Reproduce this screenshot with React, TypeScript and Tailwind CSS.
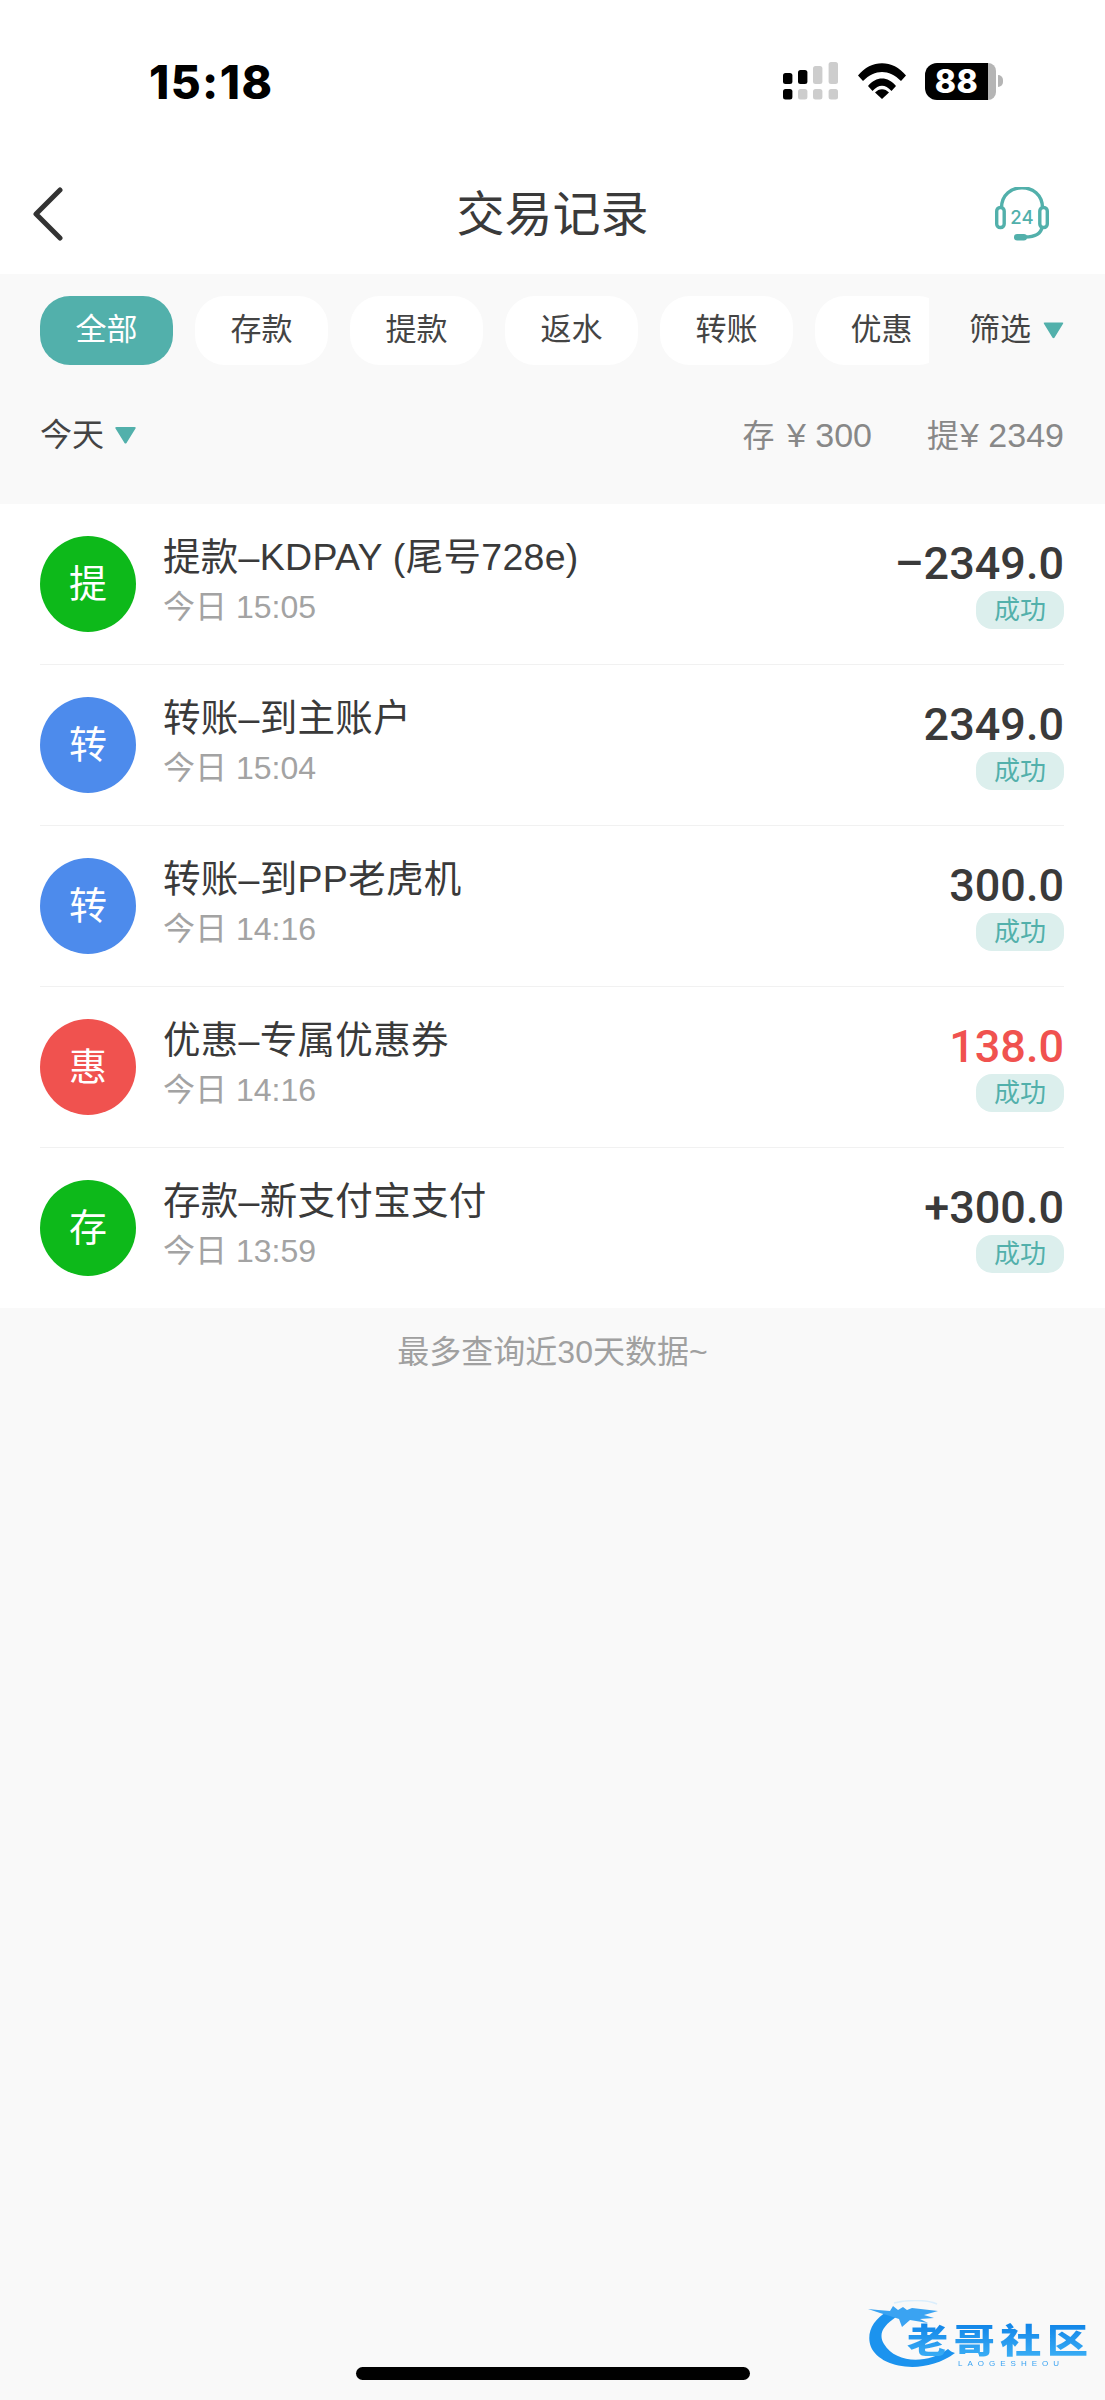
import React from "react";

const FONT = "font-['Liberation_Sans','Noto_Sans_CJK_SC',sans-serif]";

const tabs = ["全部", "存款", "提款", "返水", "转账", "优惠"];

const records = [
  { mark: "提", color: "bg-[#0db91a]", title: "提款–KDPAY (尾号728e)", time: "今日 15:05", amount: "–2349.0", red: false },
  { mark: "转", color: "bg-[#4d8bec]", title: "转账–到主账户", time: "今日 15:04", amount: "2349.0", red: false },
  { mark: "转", color: "bg-[#4d8bec]", title: "转账–到PP老虎机", time: "今日 14:16", amount: "300.0", red: false },
  { mark: "惠", color: "bg-[#f0524f]", title: "优惠–专属优惠券", time: "今日 14:16", amount: "138.0", red: true },
  { mark: "存", color: "bg-[#0db91a]", title: "存款–新支付宝支付", time: "今日 13:59", amount: "+300.0", red: false },
];

const Caret = ({ className }: { className?: string }) => (
  <svg viewBox="0 0 22 17" className={className}>
    <path d="M1 1.5 Q0 0 2 0 L20 0 Q22 0 21 1.5 L12 16 Q11 17 10 16 Z" fill="#52b0ab" />
  </svg>
);

const Signal = () => (
  <svg width="56" height="38" viewBox="0 0 56 38">
    <rect x="0" y="11" width="9.4" height="11" rx="2.5" fill="#000" />
    <rect x="15" y="8" width="9.4" height="14" rx="2.5" fill="#000" />
    <rect x="30" y="4" width="9.4" height="18" rx="2.5" fill="#cdcdcd" />
    <rect x="45.6" y="0" width="9.4" height="22" rx="2.5" fill="#cdcdcd" />
    <rect x="0" y="27" width="9.4" height="10.4" rx="2.5" fill="#000" />
    <rect x="15" y="27" width="9.4" height="10.4" rx="2.5" fill="#cdcdcd" />
    <rect x="30" y="27" width="9.4" height="10.4" rx="2.5" fill="#cdcdcd" />
    <rect x="45.6" y="27" width="9.4" height="10.4" rx="2.5" fill="#cdcdcd" />
  </svg>
);

const Wifi = () => (
  <svg width="48" height="36" viewBox="0 0 48 36">
    <path d="M0 12.5 C13 -4 35 -4 48 12.5 L43 18 C31 6 17 6 5 18 Z" fill="#000" />
    <path d="M10 23 C18 13 30 13 38 23 L33.5 28 C27 21 21 21 14.5 28 Z" fill="#000" />
    <path d="M17 29.5 C21 25 27 25 31 29.5 L24 36 Z" fill="#000" />
  </svg>
);

const Battery = () => (
  <div className="flex items-center gap-[2px]">
    <div className="flex h-[37px] w-[71px]">
      <div className="flex w-[63px] items-center justify-center rounded-l-[12px] bg-black font-['Inter',sans-serif] text-[32px] font-extrabold leading-[37px] tracking-[0.5px] text-white">
        88
      </div>
      <div className="w-[8px] rounded-r-[8px] bg-[#b5b5b5]" />
    </div>
    <div className="h-[12px] w-[5px] rounded-r-full bg-[#b5b5b5]" />
  </div>
);

const Headset = () => (
  <svg width="54" height="54" viewBox="0 0 54 54" fill="none" stroke="#52b0ab" strokeWidth="3.4">
    <path d="M6.5 21 C6.5 -6 47.5 -6 47.5 21" />
    <rect x="1.7" y="20.5" width="7.5" height="20" rx="3.5" />
    <rect x="44.8" y="20.5" width="7.5" height="20" rx="3.5" />
    <path d="M47 40 C46 47 40 50 30 50" />
    <rect x="19" y="47" width="13" height="6.5" rx="3.2" fill="#52b0ab" stroke="none" />
    <text x="27" y="36.5" textAnchor="middle" fontSize="18.5" fontWeight="500" fill="#52b0ab" stroke="none" fontFamily="Inter, sans-serif">
      24
    </text>
  </svg>
);

const Watermark = () => (
  <div className="absolute left-[866px] top-[2300px] h-[72px] w-[226px] blur-[0.7px]">
    <svg width="100" height="72" viewBox="0 0 100 72" className="absolute left-0 top-0">
      <path d="M22 11 C6 20 0 34 5 47 C14 68 58 76 89 53 C86 52 84 51 82 49 C62 64 30 64 18 44 C12 34 17 26 30 17 Z" fill="#1c93ee" />
      <path d="M2 9 L12 10 L24 11 L27 6 L32 10 L37 7 L41 10 L46 8 L72 11 L58 15 L68 18 L54 19 L62 23 L44 20 L36 27 L33 19 L24 16 L14 13 Z" fill="#3aa3f2" />
      <path d="M28 3 C40 0 60 -1 71 4" fill="none" stroke="#dbeefc" strokeWidth="1.5" />
    </svg>
    <div className="absolute left-[41px] top-[23px] flex w-[181px] origin-top scale-y-[0.82] justify-between bg-gradient-to-b from-[#0e84e8] to-[#3cb0f5] bg-clip-text text-[41px] font-black leading-[44px] text-transparent">
      <span>老</span>
      <span>哥</span>
      <span>社</span>
      <span>区</span>
    </div>
    <div className="absolute left-[92px] top-[60px] text-[8px] leading-[8px] tracking-[5px] text-[#3aa3f2]">LAOGESHEOU</div>
  </div>
);

export default function App() {
  return (
    <div className={`relative h-[2400px] w-full overflow-hidden bg-[#f9f9f9] ${FONT}`}>
      {/* status bar + nav */}
      <div className="bg-white">
        <div className="flex h-[162px] items-start justify-between pl-[149px] pr-[102px] pt-[60px]">
          <span className="font-['Inter',sans-serif] text-[46px] font-extrabold leading-[44px] tracking-[1.4px] text-black">15:18</span>
          <div className="flex items-center gap-[19px] pt-[2px]">
            <Signal />
            <Wifi />
            <Battery />
          </div>
        </div>
        <div className="flex h-[112px] items-start px-[33px] pt-[25px]">
          <div className="flex-1">
            <svg width="30" height="54" viewBox="0 0 30 54" fill="none" stroke="#333" strokeWidth="5" strokeLinecap="round" strokeLinejoin="round">
              <path d="M27 3 L3 27 L27 51" />
            </svg>
          </div>
          <h1 className="pt-[1px] text-[48px] font-normal leading-[54px] text-[#3a3a3a]">交易记录</h1>
          <div className="flex flex-1 justify-end">
            <div className="pr-[23px]">
              <Headset />
            </div>
          </div>
        </div>
      </div>

      {/* tabs */}
      <div className="flex items-center justify-between pl-[40px] pr-[41px] pt-[22px]">
        <div className="flex w-[889px] gap-[22px] overflow-hidden">
          {tabs.map((t, i) => (
            <div
              key={t}
              className={
                i === 0
                  ? "flex h-[69px] w-[133px] shrink-0 items-center justify-center rounded-[30px] bg-[#52b0ab] text-[31px] text-white"
                  : "flex h-[69px] w-[133px] shrink-0 items-center justify-center rounded-[30px] bg-white text-[31px] text-[#444]"
              }
            >
              {t}
            </div>
          ))}
        </div>
        <div className="flex items-center gap-[12px] text-[31px] text-[#444]">
          <span>筛选</span>
          <Caret className="h-[17px] w-[21px]" />
        </div>
      </div>

      {/* summary */}
      <div className="flex h-[139px] items-start justify-between pl-[40px] pr-[41px] pt-[50px]">
        <div className="flex items-center gap-[10px] text-[32px] leading-[40px] text-[#444]">
          <span>今天</span>
          <Caret className="h-[17px] w-[23px]" />
        </div>
        <div className="flex items-center gap-[55px] text-[34px] leading-[40px] text-[#888]">
          <span>
            <span className="mr-[3px] text-[32px]">存</span> ¥ 300
          </span>
          <span>
            <span className="mr-[1px] text-[32px]">提</span>¥ 2349
          </span>
        </div>
      </div>

      {/* records */}
      <div className="bg-white pl-[40px] pr-[41px]">
        {records.map((r, i) => (
          <div key={i} className={i < records.length - 1 ? "flex h-[161px] items-center border-b border-[#f1f1f1]" : "flex h-[160px] items-center"}>
            <div className={`flex h-[96px] w-[96px] shrink-0 items-center justify-center rounded-full text-[38px] text-white ${r.color}`}>
              {r.mark}
            </div>
            <div className="ml-[27px] flex-1 pb-[4px]">
              <div className="text-[37.5px] leading-[50px] tracking-[0.3px] text-[#3a3a3a]">{r.title}</div>
              <div className="text-[32px] leading-[50px] text-[#a3a3a3]">{r.time}</div>
            </div>
            <div className="flex flex-col items-end pb-[2px]">
              <div className={r.red ? "font-['Roboto',sans-serif] text-[45px] font-medium leading-[54px] text-[#f0524f]" : "font-['Roboto',sans-serif] text-[45px] font-medium leading-[54px] text-[#3a3a3a]"}>
                {r.amount}
              </div>
              <div className="flex h-[38px] w-[88px] items-center justify-center rounded-[16px] bg-[#dcefed] text-[26px] text-[#52b0ab]">成功</div>
            </div>
          </div>
        ))}
      </div>

      <div className="pt-[24px] text-center text-[32px] leading-[40px] text-[#a0a0a0]">最多查询近30天数据~</div>

      <Watermark />
      {/* home indicator */}
      <div className="absolute left-[356px] top-[2367px] h-[13px] w-[394px] rounded-full bg-black" />
    </div>
  );
}
